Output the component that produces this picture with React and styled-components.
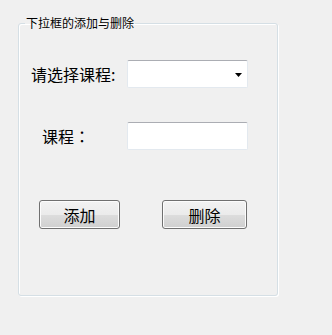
import React from "react"
import styled, { createGlobalStyle } from "styled-components"

const GlobalStyle = createGlobalStyle`
  html, body {
    margin: 0;
    padding: 0;
    background: #f0f0f0;
  }
  body {
    font-family: "Noto Sans CJK SC", "Liberation Sans", sans-serif;
    color: #000;
  }
`

const Page = styled.div`
  width: 332px;
  height: 335px;
  padding: 15px 0 0 18px;
  box-sizing: border-box;
`

const GroupBox = styled.fieldset`
  margin: 0;
  padding: 0;
  min-width: 0;
  width: 260px;
  height: 281px;
  box-sizing: border-box;
  border: 1px solid #d5dfe5;
  border-radius: 3px;
  box-shadow: 1px 1px 0 #fff, inset 1px 1px 0 #fff;
`

const Caption = styled.legend`
  margin-left: 6px;
  padding: 0 1px;
  font-size: 12px;
  line-height: 16px;
`

const Form = styled.div`
  display: flex;
  flex-direction: column;
  padding-top: 29px;
`

const Row = styled.div`
  display: flex;
  align-items: center;
  height: 28px;
  margin-bottom: ${p => p.$gap}px;
`

const Label = styled.label`
  width: 108px;
  padding-left: ${p => p.$indent}px;
  box-sizing: border-box;
  font-size: 16px;
  line-height: 20px;
  white-space: nowrap;
`

// full-width colon drawn centred in its cell, as on the original form
const Colon = styled.span`
  font-family: "Noto Sans CJK TC", "Noto Sans CJK SC", sans-serif;
`

const Field = styled.div`
  position: relative;
  width: 121px;
  height: 28px;
  box-sizing: border-box;
  background: #fff;
  border: 1px solid #e3e9ef;
  border-top-color: #abadb3;
  border-radius: 2px;
`

const Arrow = styled.svg`
  position: absolute;
  right: 5px;
  top: 12px;
`

const Buttons = styled.div`
  display: flex;
  padding-left: 20px;
  gap: 42px;
`

const Button = styled.button`
  width: ${p => p.$w}px;
  height: 29px;
  padding: 0;
  border: 1px solid #707070;
  border-radius: 3px;
  box-shadow: inset 0 0 0 1px #fcfcfc;
  background: linear-gradient(#f2f2f2 0%, #ebebeb 50%, #dddddd 50%, #cfcfcf 100%);
  font-family: "Noto Sans CJK SC", "Liberation Sans", sans-serif;
  font-size: 16px;
  line-height: 20px;
  color: #000;
`

export default function App() {
  return (
    <Page>
      <GlobalStyle />
      <GroupBox>
        <Caption>下拉框的添加与删除</Caption>
        <Form>
          <Row $gap={34}>
            <Label $indent={12}>请选择课程:</Label>
            <Field>
              <Arrow width="7" height="4" viewBox="0 0 7 4">
                <path d="M0 0h7L3.5 4z" fill="#000" />
              </Arrow>
            </Field>
          </Row>
          <Row $gap={50}>
            <Label $indent={23}>课程<Colon>：</Colon></Label>
            <Field />
          </Row>
          <Buttons>
            <Button $w={81}>添加</Button>
            <Button $w={85}>删除</Button>
          </Buttons>
        </Form>
      </GroupBox>
    </Page>
  )
}
